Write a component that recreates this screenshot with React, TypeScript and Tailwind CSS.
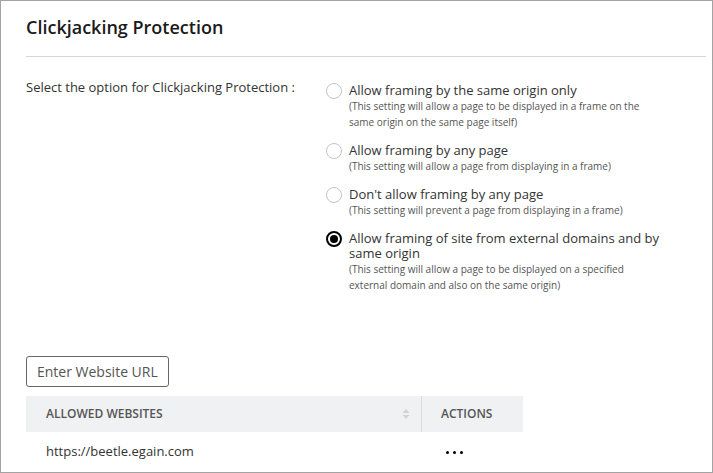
const options = [
  {
    label: "Allow framing by the same origin only",
    desc: "(This setting will allow a page to be displayed in a frame on the same origin on the same page itself)",
    checked: false,
  },
  {
    label: "Allow framing by any page",
    desc: "(This setting will allow a page from displaying in a frame)",
    checked: false,
  },
  {
    label: "Don't allow framing by any page",
    desc: "(This setting will prevent a page from displaying in a frame)",
    checked: false,
  },
  {
    label: "Allow framing of site from external domains and by same origin",
    desc: "(This setting will allow a page to be displayed on a specified external domain and also on the same origin)",
    checked: true,
  },
];

function Radio({ checked }: { checked: boolean }) {
  if (checked) {
    return (
      <span className="mt-[-0.5px] flex h-[16px] w-[16px] shrink-0 items-center justify-center rounded-full border-2 border-black bg-white">
        <span className="h-[8px] w-[8px] rounded-full bg-black" />
      </span>
    );
  }
  return <span className="mt-[-0.5px] block h-[16px] w-[16px] shrink-0 rounded-full border border-[#c4c4c4] bg-white" />;
}

function SortIcon() {
  return (
    <svg width="8" height="12" viewBox="0 0 8 12" className="text-[#d3d3d3]">
      <path d="M4 1 L7.5 5 H0.5 Z" fill="currentColor" />
      <path d="M4 11 L7.5 7 H0.5 Z" fill="currentColor" />
    </svg>
  );
}

export default function App() {
  return (
    <div className="h-[473px] w-[713px] overflow-hidden border border-[#a3a3a3] bg-white font-['Open_Sans',sans-serif] text-[#333]">
      <div className="pl-[25px] pr-[6px]">
        {/* Header */}
        <div className="border-b border-[#d6d6d6] pt-[14px] pb-[16px]">
          <h1 className="text-[18px] leading-[25px] font-semibold text-[#1a1a1a]">Clickjacking Protection</h1>
        </div>

        {/* Options */}
        <div className="mt-[21px] flex">
          <div className="w-[300px] text-[13px] leading-[18px] text-[#333]">
            Select the option for Clickjacking Protection :
          </div>
          <div className="flex flex-col gap-[13px] pt-[5px]">
            {options.map((o) => (
              <div key={o.label} className="flex gap-[7px]">
                <Radio checked={o.checked} />
                <div className="w-[318px]">
                  <div className="text-[13px] leading-[15px] text-[#333]">{o.label}</div>
                  <div className="w-[300px] text-[10px] leading-[16px] text-[#555]">{o.desc}</div>
                </div>
              </div>
            ))}
          </div>
        </div>

        {/* Add website */}
        <button className="mt-[63px] h-[31px] rounded-[3px] border border-[#666] px-[10px] text-[14px] leading-[18px] text-[#555]">
          Enter Website URL
        </button>

        {/* Table */}
        <div className="mt-[9px] w-[497px]">
          <div className="flex h-[36px] bg-[#f0f1f3] text-[12px] font-semibold text-[#555]">
            <div className="flex w-[396px] items-center justify-between border-r border-[#dcdcdc] pr-[11px] pl-[20px]">
              <span>ALLOWED WEBSITES</span>
              <SortIcon />
            </div>
            <div className="flex items-center pl-[19px]">ACTIONS</div>
          </div>
          <div className="flex h-[40px] items-center text-[13px] text-[#333]">
            <div className="w-[397px] pl-[20px]">https://beetle.egain.com</div>
            <div className="flex gap-[4px] pl-[23px]">
              <span className="h-[3px] w-[3px] rounded-full bg-black" />
              <span className="h-[3px] w-[3px] rounded-full bg-black" />
              <span className="h-[3px] w-[3px] rounded-full bg-black" />
            </div>
          </div>
        </div>
      </div>
    </div>
  );
}
